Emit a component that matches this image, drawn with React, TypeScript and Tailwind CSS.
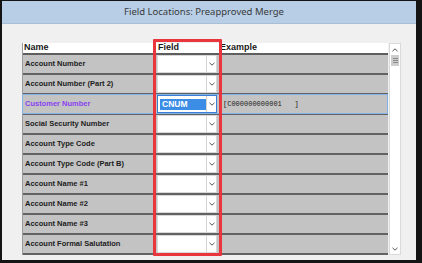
const rows = [
  "Account Number",
  "Account Number (Part 2)",
  "Customer Number",
  "Social Security Number",
  "Account Type Code",
  "Account Type Code (Part B)",
  "Account Name #1",
  "Account Name #2",
  "Account Name #3",
  "Account Formal Salutation",
];

function Chevron({ up = false }: { up?: boolean }) {
  return (
    <svg width="6" height="4" viewBox="0 0 6 4" className={up ? "rotate-180" : ""}>
      <path d="M0.5 0.8 L3 3.2 L5.5 0.8" fill="none" stroke="#555" strokeWidth="1" />
    </svg>
  );
}

function Dropdown({ value, active }: { value?: string; active?: boolean }) {
  return (
    <div
      className={
        "ml-[2px] mr-[3px] h-full flex bg-white border " +
        (active ? "border-[#3a7fd4]" : "border-[#d8d8d8]")
      }
    >
      <div className="flex-1 flex items-center pl-[2px]">
        {value && (
          <div className="bg-[#3b8de6] text-white text-[8.5px] font-bold h-[11px] w-[46px] flex items-center pl-[2px] font-['Liberation_Sans',sans-serif]">
            {value}
          </div>
        )}
      </div>
      <div className="w-[10px] border-l border-[#d4d4d4] flex items-center justify-center">
        <Chevron />
      </div>
    </div>
  );
}

export default function App() {
  return (
    <div className="w-[422px] h-[263px] bg-[#141414] pl-[2px] pt-[1px] pr-[6px] pb-[3px]">
      <div className="w-full h-full bg-[#f0f0f0] flex flex-col">
        <div className="h-[23px] bg-[#b7cee6] flex items-center justify-center pr-[10px] text-[9.5px] text-[#3a3a3a] font-['Noto_Sans',sans-serif] border-b border-[#a9bfd6]">
          Field Locations: Preapproved Merge
        </div>
        <div className="flex-1 relative pl-[20px] pt-[19px]">
          <div className="flex items-start">
            <div className="w-[366px] border-l border-[#9a9a9a]">
              {/* header */}
              <div className="h-[12px] bg-white border-b-2 border-[#5e5e5e] flex items-center text-[9px] font-bold text-[#1a1a1a] font-['Liberation_Sans',sans-serif]">
                <div className="w-[132px] pl-[1px]">Name</div>
                <div className="w-[65px] pl-[3px]">Field</div>
                <div className="flex-1 pl-[0px]">Example</div>
              </div>
              {rows.map((r, i) => {
                const active = i === 2;
                return (
                  <div
                    key={r}
                    className={
                      "relative h-[20px] border-b-2 border-[#626262] bg-[#c3c3c3] flex " +
                      (active ? "z-10" : "")
                    }
                  >
                    <div
                      className={
                        "w-[132px] pl-[2px] flex items-center text-[7.5px] font-bold font-['Liberation_Sans',sans-serif] " +
                        (active ? "text-[#8a3ff0]" : "text-[#1c1c1c]")
                      }
                    >
                      {r}
                    </div>
                    <div className="w-[65px] h-full">
                      <Dropdown value={active ? "CNUM" : undefined} active={active} />
                    </div>
                    <div className="flex-1 flex items-center pl-[3px] text-[7px] text-[#222] font-['Liberation_Mono',monospace] whitespace-pre">
                      {active ? "[C000000000001   ]" : ""}
                    </div>
                    {active && (
                      <div className="absolute left-[-1px] right-0 top-[-1px] bottom-[-1px] border border-[#80b3e6] pointer-events-none" />
                    )}
                  </div>
                );
              })}
            </div>
            <div className="ml-[1px] w-[12px] h-[212px] bg-white border border-[#dadada] flex flex-col">
              <div className="h-[11px] flex items-center justify-center">
                <Chevron up />
              </div>
              <div className="mx-[1px] h-[11px] bg-[#cdcdcd] flex flex-col items-center justify-center gap-[1px]">
                <div className="w-[5px] h-px bg-[#8a8a8a]" />
                <div className="w-[5px] h-px bg-[#8a8a8a]" />
                <div className="w-[5px] h-px bg-[#8a8a8a]" />
              </div>
              <div className="flex-1" />
              <div className="h-[11px] flex items-center justify-center">
                <Chevron />
              </div>
            </div>
          </div>
          <div className="absolute z-20 left-[151px] top-[15px] w-[69px] h-[217px] border-[3px] border-[#e8363c] rounded-[1px]" />
        </div>
      </div>
    </div>
  );
}
